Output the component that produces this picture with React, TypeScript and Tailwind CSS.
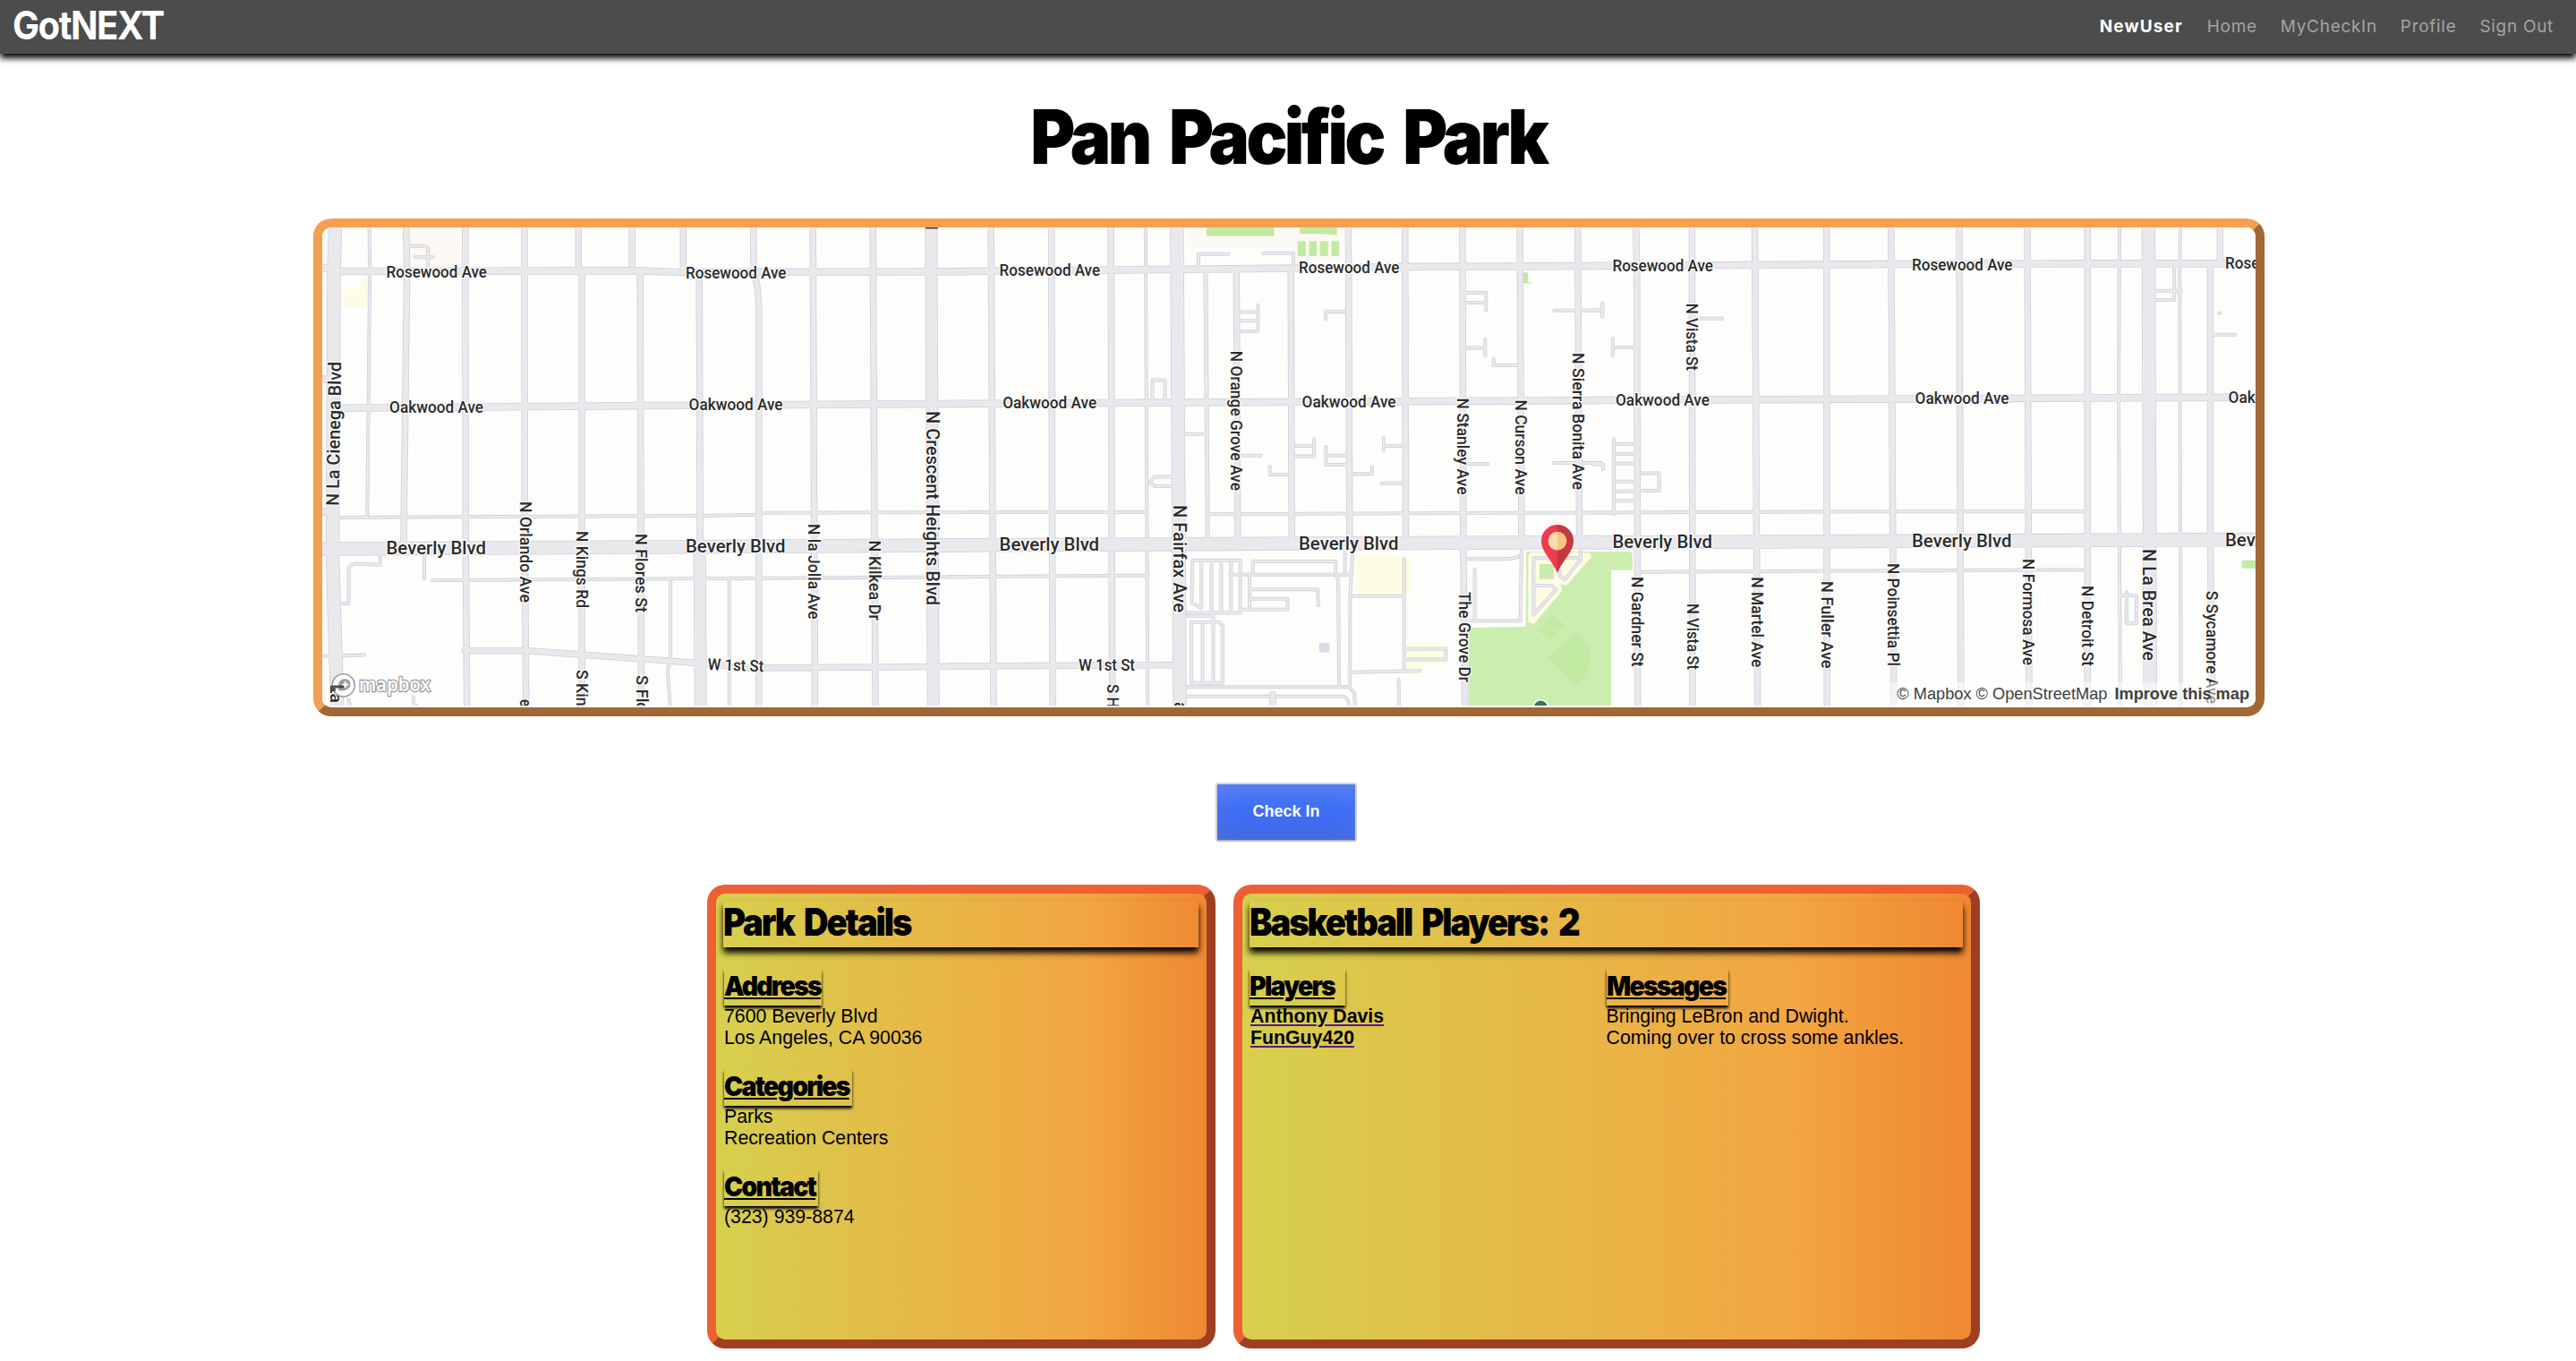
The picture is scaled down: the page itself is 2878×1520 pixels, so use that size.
import React from "react";

type Frame = "w" | "c" | "e" | "p";
type Road = { f: Frame; w: number; d: string };

/* Each quarter of the map is surveyed in its own units. */
const frames: Record<Frame, string> = {
  w: "translate(340 230) scale(0.47192 0.37628)",
  c: "translate(1060 230) scale(0.47192 0.37628)",
  e: "translate(1780 230) scale(0.49744 0.37628)",
  p: "translate(1700 560) scale(0.33333 0.33333)",
};

const roads: Road[] = [
  // lanes and driveways
  { f: "w", w: 4, d: "M154 60L155 200L149 925M82 925L975 919L1070 916L1095 911L1568 909M303 1111L1568 1101M48 1336L142 1333M284 1037V1106M180 1037V1065L120 1062Q105 1065 105 1080V1180H88M867 1105V1340L860 1380L866 1483M1006 1105V1483M248 119H280Q293 119 293 130V185M262 152H305M105 1465L108 1483M258 1458V1475L265 1483" },
  { f: "c", w: 4, d: "M466 60L471 1483M0 909H470M613 915L1568 910M0 1101L472 1097M591 180V143H662M744 140H816V178M482 578V517H512V578M560 677H600M532 804H487L476 820L487 832H532M688 315H732M732 294V341H688M688 372H730L732 353M690 741H738M760 774V797H805M818 712H865M865 693V743H818M893 714V768H942M893 741H942M954 795H1002V774M1030 688V725M1030 712H1076M1024 823H1076M892 336V314H940M1223 258H1272V310M1223 287H1272M1223 421H1270M1270 396V443M1290 453V473H1348M1433 310H1548M1548 290V328M1230 766H1276M1433 763H1545L1550 780" },
  { f: "c", w: 4, d: "M577 1052H690V1208H565M577 1052L575 1178L598 1193V1052M622 1052V1208M645 1052V1208M668 1052V1208M565 1217H620L628 1208M574 1235H640L648 1245V1416H574ZM601 1235V1416M626 1208V1416M720 1090V1055H916V1092L922 1110L924 1425M666 1094H955M712 1094V1198H802V1166H712M690 1198H712M712 1138H873L875 1185M938 1020V1090M956 1035L950 1160V1425M562 1428H948L960 1445L962 1483M562 1456H930Q945 1456 948 1483M956 1158H1078M1078 1048V1382M948 1384L1116 1380M1082 1315H1177V1346H1082M1065 1406L1066 1483M1226 1048H1320Q1350 1044 1356 1035M1356 1020L1353 1232H1235M1245 1078V1232" },
  { f: "e", w: 4, d: "M1182 60L1180 590L1184 1483M1319 60L1317 175L1320 1483M0 910L700 907H1105M105 1086L1105 1080M44 393V443M44 420H92M240 334H290M46 693V915M46 707H92M46 736H92M46 765H92M46 818H92M46 847H92M46 875H92M105 793H148V845H105M0 309H20M20 290V328M0 767H22V781M1262 252H1320M1305 180V279H1262M1392 382H1441M1183 1156H1220V1239H1198V1147M1405 318H1407" },
  { f: "p", w: 4, d: "M40 190H198M198 150V195L145 262L128 250V235M40 190V380L116 295L100 282H40" },
  // residential streets
  { f: "w", w: 7.5, d: "M241 60L243 190L235 1000M381 60L382 1000L385 1483M521 60L522 1000L525 1483M649 60V190M657 195V1483M776 60V190M795 195L798 1483M897 60V195M935 200L937 1000M1063 60L1064 200Q1076 240 1076 310V1483M1204 60L1209 1483M1346 60L1352 1483M380 1320H530L660 1332L935 1357L1050 1371L1568 1367" },
  { f: "c", w: 7.5, d: "M100 60L106 1483M243 60L246 1483M384 60L387 1483M681 190L684 985M810 190L812 985M946 60L949 985M1080 60L1082 985M1216 60L1218 1000L1222 1483M1352 60L1356 985M1489 60L1493 985M0 1366L530 1363M767 1450V1483" },
  { f: "c", w: 5, d: "M608 195L613 985" },
  { f: "e", w: 7.5, d: "M96 60L98 200L100 1483M222 60L223 1483M363 60L369 1483M524 60L525 1483M669 60L675 1483M822 60L826 1483M975 60L979 1483M1110 60V1483M1408 60V170M1386 180V1000L1390 1483" },
  { f: "w", w: 8.5, d: "M36 185H60M36 515H58M36 909H55M88 194L790 192L890 197L1568 195M88 600L900 592L1568 587" },
  { f: "c", w: 8.5, d: "M0 195L400 190L830 185L1080 181L1540 178M0 587L800 582L1540 577" },
  { f: "e", w: 8.5, d: "M0 178L700 173L1100 171H1500M0 577L1100 570L1500 568" },
  // arterials
  { f: "w", w: 14, d: "M936 1025L938 1483M1484 60L1489 1483" },
  { f: "w", w: 15.5, d: "M73 60L70 200L67 900V1050L78 1483M30 1018L1568 1007" },
  { f: "c", w: 15.5, d: "M540 60L547 1483M-20 1007L1540 998" },
  { f: "e", w: 15.5, d: "M1247 60L1251 1483M-10 999L1500 990" },
];

type Area = { f: Frame; fill: string; d: string };
const areas: Area[] = [
  { f: "w", fill: "#fcf8f3", d: "M248 60H370V180H248Z" },
  { f: "w", fill: "#fefde3", d: "M90 248H130L138 210H150V299H90Z" },
  { f: "c", fill: "#fcf8f3", d: "M565 60H930V160H823V120H565Z" },
  { f: "c", fill: "#c3eaa2", d: "M610 60H770V90H610ZM831 60H919V87L880 83H831ZM826 104H845V149H826ZM853 104H871V149H853ZM879 104H898V149H879ZM906 104H924V149H906ZM1360 197H1371V226H1379V230H1360Z" },
  { f: "c", fill: "#fdfde3", d: "M965 1040H1092V1153H965ZM1085 1298H1181V1362H1118V1395H1085Z" },
  { f: "c", fill: "#dcdae5", d: "M877 1297H901V1325H877Z" },
  { f: "e", fill: "#c3eaa2", d: "M1457 1052H1500V1076H1457Z" },
  { f: "p", fill: "#ccedb0", d: "M16 168H365L372 176V230H300V690H-178V423L14 420Z" },
  { f: "p", fill: "#fefde3", d: "M30 170L228 172L235 185L150 282L130 275L135 290L135 300L40 412L22 402V185Z" },
  { f: "p", fill: "#c9ecac", d: "M60 210H108V260H60Z" },
  { f: "p", fill: "#c3eaa2", d: "M100 378L143 410L122 438L80 405ZM78 408L114 440L95 466L54 432ZM86 523L182 438Q230 475 230 523Q230 580 182 620Z" },
];

type Label = { t: string; x: number; y: number; len: number; size: number; rot?: number };
const rowX = [431.5, 766, 1116.6, 1451, 1801.4, 2136, 2486];
const rowY = {
  rosewood: [309.8, 310.5, 308, 305, 302.6, 301.5, 300.4],
  oakwood: [460.7, 458.4, 455.8, 455, 452.8, 451.3, 449.7],
  beverly: [619, 617.2, 615.3, 613.8, 612.3, 610.8, 609.7],
};

/* Street name running down a road centred on x, between two heights. */
const down = (t: string, x: number, y1: number, y2: number, size = 18): Label => ({
  t, x: x - size * 0.36, y: y1, len: y2 - y1, size, rot: 90,
});

const labels: Label[] = [
  ...rowX.map((x, i) => ({ t: "Rosewood Ave", x, y: rowY.rosewood[i], len: 112.5, size: 18 })),
  ...rowX.map((x, i) => ({ t: "Oakwood Ave", x: x + 3.6, y: rowY.oakwood[i], len: 105, size: 18 })),
  ...rowX.map((x, i) => ({ t: "Beverly Blvd", x, y: rowY.beverly[i], len: 111.5, size: 20 })),
  { t: "W 1st St", x: 790.5, y: 748, len: 62.5, size: 18, rot: 2 },
  { t: "W 1st St", x: 1205, y: 749.3, len: 63, size: 18 },
  { t: "N La Cienega Blvd", x: 378.5, y: 565, len: 161, size: 20, rot: -89 },
  down("N Orlando Ave", 587.3, 560, 673),
  down("N Kings Rd", 650.5, 593, 679),
  down("N Flores St", 716.6, 596, 684),
  down("N la Jolla Ave", 909.6, 585, 691.7),
  down("N Kilkea Dr", 977, 603.6, 692.8),
  down("N Crescent Heights Blvd", 1042, 459, 676, 20),
  down("S Kings Rd", 650.5, 748, 833),
  down("S Flores St", 717, 754, 842),
  down("e", 587.5, 781, 789),
  down("La", 375.5, 764, 785),
  down("N Fairfax Ave", 1318.6, 564, 684, 20),
  down("N Orange Grove Ave", 1381.8, 391.8, 548),
  down("N Stanley Ave", 1634, 444.5, 552.5),
  down("N Curson Ave", 1699, 446.4, 552.5),
  down("N Sierra Bonita Ave", 1763.6, 394, 547),
  down("The Grove Dr", 1636.7, 661, 762),
  down("S Hayworth Ave", 1243.6, 764, 884),
  down("a", 1319, 784, 794, 20),
  down("N Vista St", 1890.4, 338.7, 414),
  down("N Gardner St", 1829.7, 644, 744.7),
  down("N Vista St", 1891, 674, 748),
  down("N Martel Ave", 1963, 644.3, 745.5),
  down("N Fuller Ave", 2041, 649, 746.6),
  down("N Poinsettia Pl", 2115.8, 628.9, 744),
  down("N Formosa Ave", 2266.5, 624, 743),
  down("N Detroit St", 2332.7, 654, 744),
  down("N La Brea Ave", 2401.3, 613, 738, 20),
  down("S Sycamore Ave", 2471.4, 659.7, 786),
];

function MapCanvas() {
  return (
    <svg className="block h-[534px] w-[2160px] bg-[#fdfdfc]" viewBox="360 254 2160 534">
      {areas.map((a, i) => (
        <g key={i} transform={frames[a.f]}>
          <path d={a.d} fill={a.fill} />
        </g>
      ))}
      {roads.map((r, i) => (
        <g key={i} transform={frames[r.f]} fill="none" stroke="#d0d0d9" strokeLinecap="round" strokeLinejoin="round">
          <path d={r.d} strokeWidth={r.w} vectorEffect="non-scaling-stroke" />
        </g>
      ))}
      {roads.map((r, i) => (
        <g key={i} transform={frames[r.f]} fill="none" stroke="#e8e8ed" strokeLinecap="round" strokeLinejoin="round">
          <path d={r.d} strokeWidth={r.w - 1.6} vectorEffect="non-scaling-stroke" />
        </g>
      ))}
      <rect x="1034" y="254" width="14" height="1.5" fill="#444" />
      <circle cx="1721.3" cy="790" r="9" fill="#fff" />
      <circle cx="1721.3" cy="790" r="7.5" fill="#2f7a5b" />
      <g fontFamily="'Roboto', 'Liberation Sans', sans-serif" fontWeight="500" fill="#2b2b2b" stroke="#fbfbfb" strokeWidth="2.5" strokeLinejoin="round" paintOrder="stroke">
        {labels.map((l, i) => (
          <text
            key={i}
            fontSize={l.size}
            textLength={l.len}
            lengthAdjust="spacingAndGlyphs"
            transform={`translate(${l.x} ${l.y}) rotate(${l.rot ?? 0})`}
          >
            {l.t}
          </text>
        ))}
      </g>
      {/* park marker */}
      <g>
        <path d="M1740 586A18 18 0 0 0 1722 604C1722 616 1733 624 1740 640Z" fill="#ed3b50" />
        <path d="M1740 586A18 18 0 0 1 1758 604C1758 616 1747 624 1740 640Z" fill="#c53742" />
        <path d="M1740 593.7A10.4 10.4 0 0 0 1740 614.5Z" fill="#fbdcae" />
        <path d="M1740 593.7A10.4 10.4 0 0 1 1740 614.5Z" fill="#f8c681" />
      </g>
      {/* mapbox wordmark */}
      <g>
        <circle cx="383.7" cy="765.3" r="12.6" fill="#fff" fillOpacity="0.75" stroke="#9c9c9c" strokeWidth="1.5" />
        <path d="M378.500 771C376.500 763 380 758 386 758.300C391.500 758.800 393 765 389.800 768.500C387 771.500 382 772 378.500 771Z" fill="#9c9c9c" />
        <path d="M385.800 760L387.100 763.300L390.300 764.600L387.100 765.900L385.800 769.200L384.500 765.900L381.300 764.600L384.500 763.300Z" fill="#fff" />
        <path d="M371 765.500H384V768.500H375V772H371Z" fill="#2b2b2b" fillOpacity="0.75" />
        <text x="401" y="771.500" fontFamily="'Open Sans', sans-serif" fontWeight="600" fontSize="22" textLength="80" lengthAdjust="spacingAndGlyphs" fill="#fff" stroke="#9c9c9c" strokeWidth="2.600" strokeLinejoin="round" paintOrder="stroke">mapbox</text>
      </g>
    </svg>
  );
}

function SectionHeading({ children, width }: { children: React.ReactNode; width: string }) {
  return (
    <h3 className={`h-[40.5px] ${width} pt-px shadow-[0_3px_3px_#000]`}>
      <span className="inline-block origin-left scale-x-[0.95] whitespace-nowrap font-['Inter'] text-[30px] leading-[36px] font-black tracking-[-1.9px] underline decoration-2 underline-offset-2">
        {children}
      </span>
    </h3>
  );
}

function Card({ title, width, children }: { title: string; width: string; children: React.ReactNode }) {
  return (
    <section className={`h-[518px] ${width} rounded-[20px] border-[10px] border-t-[#ed6033] border-r-[#9f3f21] border-b-[#9f3f21] border-l-[#ed6033] bg-[linear-gradient(90deg,#d6d04d_0%,#e5ba48_38%,#f2a641_75%,#ef8832_100%)] pt-[8px] pr-[9px] pl-[8px]`}>
      <h2 className="h-[52px] shadow-[0_6px_7px_#000]">
        <span className="inline-block origin-left scale-x-[0.91] whitespace-nowrap font-['Inter'] text-[42px] leading-[48px] font-black tracking-[-2.3px] [word-spacing:6px]">
          {title}
        </span>
      </h2>
      {children}
    </section>
  );
}

const navLinks = ["Home", "MyCheckIn", "Profile", "Sign Out"];

export default function App() {
  return (
    <div className="h-[1520px] w-[2878px] overflow-hidden bg-white font-['Liberation_Sans',sans-serif] text-black">
      <nav className="relative flex h-[60px] items-center justify-between bg-[#4c4c4c] pr-[25px] pl-[14px] shadow-[0_5px_7px_#000]">
        <span className="mb-[5px] origin-left scale-x-[0.91] font-['Inter'] text-[44px] leading-[52px] font-bold tracking-[-1.6px] text-white">GotNEXT</span>
        <div className="flex gap-[26px] font-['Inter'] text-[19px] leading-6 tracking-[0.7px] text-[#a3a3a3]">
          <span className="mr-px font-bold tracking-[1.1px] text-white">NewUser</span>
          {navLinks.map((l) => (
            <span key={l}>{l}</span>
          ))}
        </div>
      </nav>

      <h1 className="mt-[42px] flex h-[102px] justify-center">
        <span className="scale-x-[0.908] font-['Inter'] text-[84px] leading-[102px] font-black tracking-[-4px] whitespace-nowrap [word-spacing:12px]">
          Pan Pacific Park
        </span>
      </h1>

      <div className="relative mt-[40px] ml-[350px] h-[556px] w-[2180px] overflow-hidden rounded-[20px] border-[10px] border-t-[#f4a052] border-r-[#a16836] border-b-[#a16836] border-l-[#f4a052]">
        <MapCanvas />
        <div className="absolute right-0 bottom-[2px] flex h-[26px] w-[408px] items-center justify-end gap-[8px] bg-white/50 pt-[2px] pr-[7px] text-[18.2px] whitespace-nowrap text-[#404040]">
          <span>© Mapbox © OpenStreetMap</span>
          <b>Improve this map</b>
        </div>
      </div>

      <div className="mt-[74px] ml-[1358px]">
        <button className="block h-[66px] w-[158px] rounded-[3px] border-2 border-t-[#d3d5da] border-r-[#cfcfd3] border-b-[#b8b8ba] border-l-[#cfcfd3] bg-[linear-gradient(180deg,#5080f8_0%,#3f6ef5_45%,#3f6df3_65%,#4068e0_100%)] pb-[2px] text-[18px] font-bold text-white shadow-[inset_0_0_24px_rgba(110,125,220,0.35)]">
          Check In
        </button>
      </div>

      <div className="mt-[48px] ml-[790px] flex gap-[20px]">
        <Card title="Park Details" width="w-[568px]">
          <div className="mt-[24px] flex flex-col gap-[23.5px] pl-px text-[21.3px] leading-6">
            <div>
              <SectionHeading width="w-[109px]">Address</SectionHeading>
              <p>7600 Beverly Blvd</p>
              <p>Los Angeles, CA 90036</p>
            </div>
            <div>
              <SectionHeading width="w-[143px]">Categories</SectionHeading>
              <p>Parks</p>
              <p>Recreation Centers</p>
            </div>
            <div>
              <SectionHeading width="w-[105px]">Contact</SectionHeading>
              <p>(323) 939-8874</p>
            </div>
          </div>
        </Card>
        <Card title="Basketball Players: 2" width="w-[834px]">
          <div className="mt-[24px] grid grid-cols-2 text-[21.3px] leading-6">
            <div>
              <SectionHeading width="w-[107px]">Players</SectionHeading>
              <p className="pl-px font-bold underline decoration-[#551a8b] decoration-2 underline-offset-2">Anthony Davis</p>
              <p className="pl-px font-bold underline decoration-[#551a8b] decoration-2 underline-offset-2">FunGuy420</p>
            </div>
            <div>
              <SectionHeading width="w-[136px]">Messages</SectionHeading>
              <p>Bringing LeBron and Dwight.</p>
              <p>Coming over to cross some ankles.</p>
            </div>
          </div>
        </Card>
      </div>
    </div>
  );
}
